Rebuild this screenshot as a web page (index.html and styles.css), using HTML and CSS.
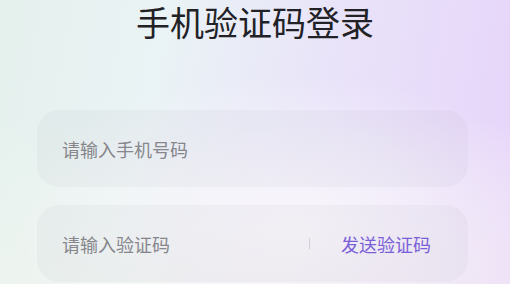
FILE: index.html
```html
<!DOCTYPE html>
<html lang="zh">
<head>
<meta charset="utf-8">
<link rel="stylesheet" href="styles.css">
</head>
<body>
<div class="page">
  <h1 class="title">手机验证码登录</h1>
  <div class="form">
    <div class="field"><span class="placeholder">请输入手机号码</span></div>
    <div class="field">
      <span class="placeholder grow">请输入验证码</span>
      <span class="divider"></span>
      <span class="send">发送验证码</span>
    </div>
  </div>
</div>
</body>
</html>
```
FILE: styles.css
```css
html, body {
  margin: 0;
  padding: 0;
  width: 510px;
  height: 284px;
  overflow: hidden;
}
body {
  font-family: "Noto Sans CJK SC", "Noto Sans", sans-serif;
  background:
    radial-gradient(ellipse 280px 150px at 290px 225px, rgba(250,248,255,0.9), rgba(250,248,255,0) 100%),
    linear-gradient(100deg, #e5f1ed 0%, #eaf3f5 30%, #e9e3f9 62%, #e6d4fa 100%);
}
.page {
  height: 284px;
  background: linear-gradient(180deg, rgba(255,255,255,0) 40%, rgba(250,248,238,0.35) 100%);
}
.title {
  margin: 4px 0 0;
  height: 36px;
  line-height: 36px;
  font-size: 34px;
  font-weight: 400;
  color: #222226;
  text-align: center;
}
.form {
  padding: 70px 42px 0 37px;
  display: flex;
  flex-direction: column;
  gap: 18px;
}
.field {
  height: 77px;
  border-radius: 22px;
  background: rgba(120, 120, 150, 0.055);
  display: flex;
  align-items: center;
  padding: 0 37px 0 25px;
}
.placeholder {
  font-size: 18px;
  color: #86868c;
  line-height: 24px;
}
.grow { flex: 1; }
.divider {
  width: 1px;
  height: 11px;
  background: #cfcfd6;
  margin-right: 31px;
}
.send {
  font-size: 18px;
  line-height: 24px;
  color: #7b5fd8;
}
```
